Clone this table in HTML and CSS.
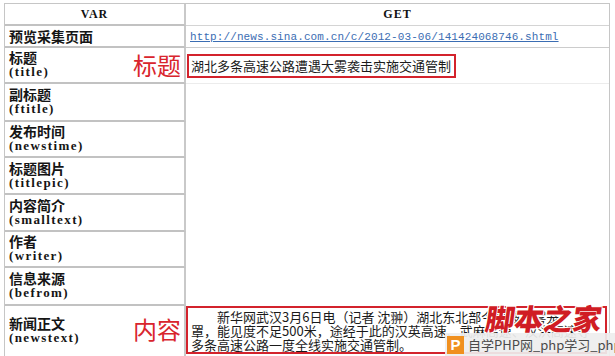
FILE: index.html
```html
<!DOCTYPE html>
<html lang="zh-CN">
<head>
<meta charset="utf-8">
<title>VAR GET</title>
<link rel="stylesheet" href="styles.css">
</head>
<body>
<div class="sheet">
  <div class="cell head left">VAR</div>
  <div class="cell head right">GET</div>

  <div class="cell left single"><span class="cn">预览采集页面</span></div>
  <div class="cell right linkcell"><a class="link" href="#">http://news.sina.com.cn/c/2012-03-06/141424068746.shtml</a></div>

  <div class="cell left pair">
    <div class="lbl"><span class="cn">标题</span><span class="en">(title)</span></div>
    <span class="note">标题</span>
  </div>
  <div class="cell right titlecell"><span class="redbox">湖北多条高速公路遭遇大雾袭击实施交通管制</span></div>

  <div class="cell left pair"><div class="lbl"><span class="cn">副标题</span><span class="en">(ftitle)</span></div></div>
  <div class="cell right blank"></div>

  <div class="cell left pair"><div class="lbl"><span class="cn">发布时间</span><span class="en">(newstime)</span></div></div>
  <div class="cell right blank"></div>

  <div class="cell left pair"><div class="lbl"><span class="cn">标题图片</span><span class="en">(titlepic)</span></div></div>
  <div class="cell right blank"></div>

  <div class="cell left pair"><div class="lbl"><span class="cn">内容简介</span><span class="en">(smalltext)</span></div></div>
  <div class="cell right blank"></div>

  <div class="cell left pair"><div class="lbl"><span class="cn">作者</span><span class="en">(writer)</span></div></div>
  <div class="cell right blank"></div>

  <div class="cell left pair"><div class="lbl"><span class="cn">信息来源</span><span class="en">(befrom)</span></div></div>
  <div class="cell right blank"></div>

  <div class="cell left pair bodyrow">
    <div class="lbl"><span class="cn">新闻正文</span><span class="en">(newstext)</span></div>
    <span class="note">内容</span>
  </div>
  <div class="cell right bodycell">
    <div class="textbox">
      <div class="line first">新华网武汉3月6日电（记者 沈翀）湖北东北部今早被大雾笼</div>
      <div class="line">罩，能见度不足500米，途经于此的汉英高速、武麻高速、汉洪高速等</div>
      <div class="line">多条高速公路一度全线实施交通管制。</div>
    </div>
  </div>
</div>

<div class="mark">脚本之家</div>
<div class="brand"><span class="picon">P</span><span class="btext">自学PHP网_php学习_php教程</span></div>
</body>
</html>
```

FILE: styles.css
```css
* { box-sizing: border-box; }

html, body {
  margin: 0;
  padding: 0;
  background: #ffffff;
  overflow: hidden;
}

body {
  width: 615px;
  height: 356px;
  position: relative;
  font-family: "Noto Sans CJK SC", "Noto Sans", sans-serif;
  color: #1a1a1a;
}

.sheet {
  margin: 3px 0 0 4px;
  width: 606px;
  display: grid;
  grid-template-columns: 181px 423px;
  grid-template-rows: 22px 22px 36px 38px 36px 37px 37px 36px 38px 60px;
  border: 1px solid #c6c6c6;
  border-bottom: none;
}

.cell {
  min-width: 0;
  overflow: hidden;
}

.left {
  border-right: 2px solid #c9c9c9;
  border-bottom: 2px solid #c2c2c2;
  padding: 0 6px 0 4px;
}

.right {
  border-bottom: 1px solid #d4d4d4;
}

.head {
  display: flex;
  align-items: center;
  justify-content: center;
  font-family: "Liberation Serif", "DejaVu Serif", serif;
  font-weight: bold;
  font-size: 12px;
  letter-spacing: 1px;
  color: #111;
}

.head.left { padding: 0; }

.single {
  display: flex;
  align-items: center;
}

.cn {
  font-family: "Noto Sans CJK SC", sans-serif;
  font-weight: bold;
  font-size: 14px;
  line-height: 16px;
  display: block;
  color: #151515;
}

.en {
  font-family: "Liberation Serif", "DejaVu Serif", serif;
  font-weight: bold;
  font-size: 13px;
  line-height: 14px;
  letter-spacing: 1.4px;
  display: block;
  color: #151515;
}

.pair {
  display: flex;
  align-items: center;
  justify-content: space-between;
}

.lbl { padding-bottom: 2px; }

.note {
  font-family: "Noto Sans CJK SC", sans-serif;
  font-size: 24px;
  line-height: 28px;
  color: #d9252d;
  margin-right: -3px;
}

.linkcell {
  display: flex;
  align-items: center;
  padding-left: 4px;
  border-bottom: 1px solid #cccccc;
}

.link {
  font-family: "Liberation Mono", "DejaVu Sans Mono", monospace;
  font-size: 11px;
  color: #3b6db3;
  text-decoration: underline;
  letter-spacing: 0.1px;
}

.titlecell {
  padding: 4px 0 0 1px;
  border-bottom: 1px solid #ececec;
}

.redbox {
  display: inline-block;
  border: 2px solid #d3232c;
  padding: 1px 3px 2px 2px;
  font-size: 13px;
  line-height: 17px;
  color: #1a1a1a;
  white-space: nowrap;
}

.blank { border-bottom: none; }

.bodyrow { border-bottom: none; align-items: flex-start; padding-top: 9px; }

.bodycell {
  border-bottom: none;
  padding: 0 2px 0 0;
}

.textbox {
  border: 2px solid #d3232c;
  height: 48px;
  padding: 2px 2px 0 3px;
  font-size: 13px;
  line-height: 14px;
  color: #1a1a1a;
  overflow: hidden;
}

.line { white-space: nowrap; }
.line.first { text-indent: 26px; }

.mark {
  position: absolute;
  left: 486px;
  top: 299px;
  font-family: "Noto Sans CJK SC", sans-serif;
  font-weight: 900;
  font-size: 29px;
  line-height: 36px;
  color: #d01c24;
  letter-spacing: 0;
  transform: skewX(-8deg);
  text-shadow: 1px 1px 0 #fff, -1px -1px 0 #fff, 1px -1px 0 #fff, -1px 1px 0 #fff;
}

.brand {
  position: absolute;
  left: 445px;
  top: 333px;
  width: 190px;
  height: 23px;
  display: flex;
  align-items: center;
  gap: 4px;
  background: rgba(238, 238, 238, 0.92);
  padding-left: 2px;
  white-space: nowrap;
}

.picon {
  width: 17px;
  height: 18px;
  background: #f0901f;
  color: #fff;
  font-family: "Liberation Sans", sans-serif;
  font-weight: bold;
  font-size: 15px;
  line-height: 18px;
  text-align: center;
  flex: none;
}

.btext {
  font-family: "Noto Sans CJK SC", "Noto Sans", sans-serif;
  font-size: 13px;
  color: #4a4a4a;
}
```
